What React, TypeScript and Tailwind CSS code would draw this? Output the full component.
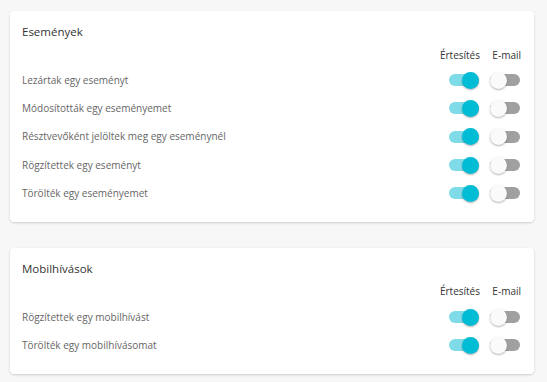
import { useState } from 'react';

// ── Data ─────────────────────────────────────────────────────────────────────

interface Setting {
    label: string;
    notify: boolean;
    email: boolean;
}

interface Section {
    title: string;
    items: Setting[];
}

const sections: Section[] = [
    {
        title: 'Események',
        items: [
            { label: 'Lezártak egy eseményt', notify: true, email: false },
            { label: 'Módosították egy eseményemet', notify: true, email: false },
            { label: 'Résztvevőként jelöltek meg egy eseménynél', notify: true, email: false },
            { label: 'Rögzítettek egy eseményt', notify: true, email: false },
            { label: 'Törölték egy eseményemet', notify: true, email: false },
        ],
    },
    {
        title: 'Mobilhívások',
        items: [
            { label: 'Rögzítettek egy mobilhívást', notify: true, email: false },
            { label: 'Törölték egy mobilhívásomat', notify: true, email: false },
        ],
    },
];

// ── Sub-components ───────────────────────────────────────────────────────────

function Toggle({ checked, onChange }: { checked: boolean; onChange: () => void }) {
    return (
        <button
            type="button"
            role="switch"
            aria-checked={checked}
            onClick={onChange}
            className="relative h-[17px] w-[30px] shrink-0"
        >
            <span
                className={
                    'absolute left-0 right-0 top-[2.5px] h-[12px] rounded-full ' +
                    (checked ? 'bg-[#7fdbe8]' : 'bg-[#a0a0a0]')
                }
            />
            <span
                className={
                    'absolute top-0 h-[17px] w-[17px] rounded-full shadow-[0_1px_2px_rgba(0,0,0,0.3)] ' +
                    (checked ? 'right-0 bg-[#00bcd4]' : 'left-0 bg-[#fafafa]')
                }
            />
        </button>
    );
}

function SettingsCard({ section }: { section: Section }) {
    const [items, setItems] = useState(section.items);

    const flip = (i: number, key: 'notify' | 'email') =>
        setItems(prev => prev.map((it, j) => (j === i ? { ...it, [key]: !it[key] } : it)));

    return (
        <div className="rounded-[4px] bg-white pl-3 pr-[13px] pt-[13px] pb-[14.5px] shadow-[0_1px_3px_rgba(0,0,0,0.12),0_1px_2px_rgba(0,0,0,0.06)]">
            <h2 className="h-4 text-[11.5px] font-medium leading-4 text-[#333]">{section.title}</h2>

            {/* Column headers */}
            <div className="mt-[7px] flex h-4 items-center text-[10px] text-[#333]">
                <div className="flex-1" />
                <div className="w-[44px] text-right">Értesítés</div>
                <div className="ml-[10px] w-[31px] text-right">E-mail</div>
            </div>

            {/* Rows */}
            <div className="mt-[3px]">
                {items.map((item, i) => (
                    <div key={item.label} className="flex h-[28.3px] items-center">
                        <span className="flex-1 text-[10px] text-[#666]">{item.label}</span>
                        <div className="flex w-[44px] justify-end pr-[1px]">
                            <Toggle checked={item.notify} onChange={() => flip(i, 'notify')} />
                        </div>
                        <div className="ml-[10px] flex w-[31px]">
                            <Toggle checked={item.email} onChange={() => flip(i, 'email')} />
                        </div>
                    </div>
                ))}
            </div>
        </div>
    );
}

// ── Component ────────────────────────────────────────────────────────────────

export default function App() {
    return (
        <div
            className="min-h-screen bg-[#f7f7f7] pl-[10px] pr-[13px] pt-[11px] pb-4"
            style={{ fontFamily: '"Open Sans", "Liberation Sans", sans-serif' }}
        >
            <div className="flex flex-col gap-[26px]">
                {sections.map(s => (
                    <SettingsCard key={s.title} section={s} />
                ))}
            </div>
        </div>
    );
}
